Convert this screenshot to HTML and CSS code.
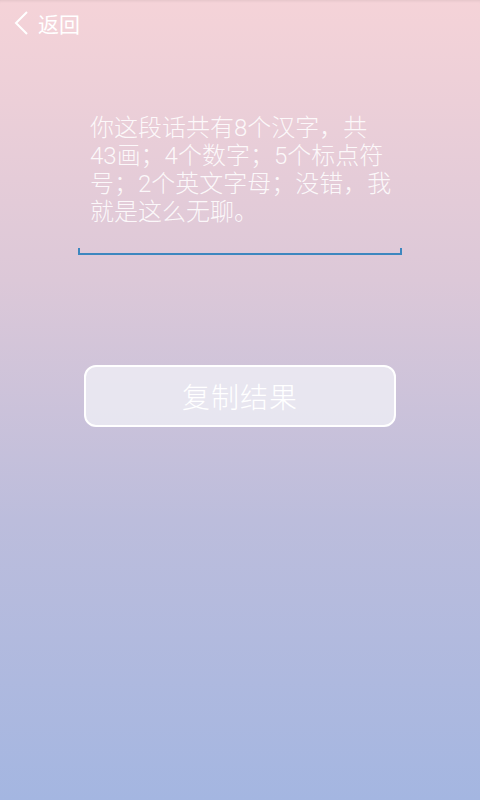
FILE: index.html
```html
<!DOCTYPE html>
<html lang="zh">
<head>
<meta charset="utf-8">
<link rel="stylesheet" href="styles.css">
</head>
<body>
<div class="screen">
  <div class="topbar">
    <svg class="chev" width="16" height="24" viewBox="0 0 16 24"><path d="M14 1 L3 12 L14 23" fill="none" stroke="#fff" stroke-width="2"/></svg>
    <span class="back">返回</span>
  </div>
  <div class="field">
    <div class="result">你这段话共有8个汉字，共43画；4个数字；5个标点符号；2个英文字母；没错，我就是这么无聊。</div>
    <div class="underline"></div>
  </div>
  <div class="btnwrap">
    <div class="btn">复制结果</div>
  </div>
</div>
</body>
</html>
```
FILE: styles.css
```css
html, body { margin: 0; padding: 0; }
body {
  font-family: "Noto Sans CJK SC", "Noto Sans", sans-serif;
}
.screen {
  width: 480px;
  height: 800px;
  background: linear-gradient(to bottom, #f5d3d8 0%, #dcc8d8 35%, #bcbddc 65%, #a4b6e1 100%);
  box-shadow: inset 0 3px 3px -2px rgba(0,0,0,0.08);
  display: flex;
  flex-direction: column;
  overflow: hidden;
}
.topbar {
  height: 46px;
  display: flex;
  align-items: center;
  padding-left: 13px;
  gap: 9px;
  box-sizing: border-box;
}
.chev { display: block; }
.back {
  color: #fff;
  font-size: 21px;
  line-height: 24px;
}
.field {
  margin: 68px 0 0 78px;
  width: 324px;
  display: flex;
  flex-direction: column;
}
.result {
  width: 303px;
  padding-left: 12px;
  color: rgba(255,255,255,0.88);
  font-size: 24px;
  line-height: 28px;
  font-weight: 300;
  font-family: "Roboto", "Noto Sans CJK SC", sans-serif;
}
.underline {
  margin-top: 22px;
  height: 7px;
  border: 2px solid #3d87bf;
  border-top: none;
  box-sizing: border-box;
}
.btnwrap {
  margin: 110px 84px 0 84px;
}
.btn {
  height: 62px;
  box-sizing: border-box;
  border: 2px solid #fff;
  border-radius: 12px;
  background: rgba(240,240,246,0.78);
  color: #fff;
  font-size: 28px;
  font-weight: 300;
  display: flex;
  align-items: center;
  justify-content: center;
  letter-spacing: 1px;
}
```
